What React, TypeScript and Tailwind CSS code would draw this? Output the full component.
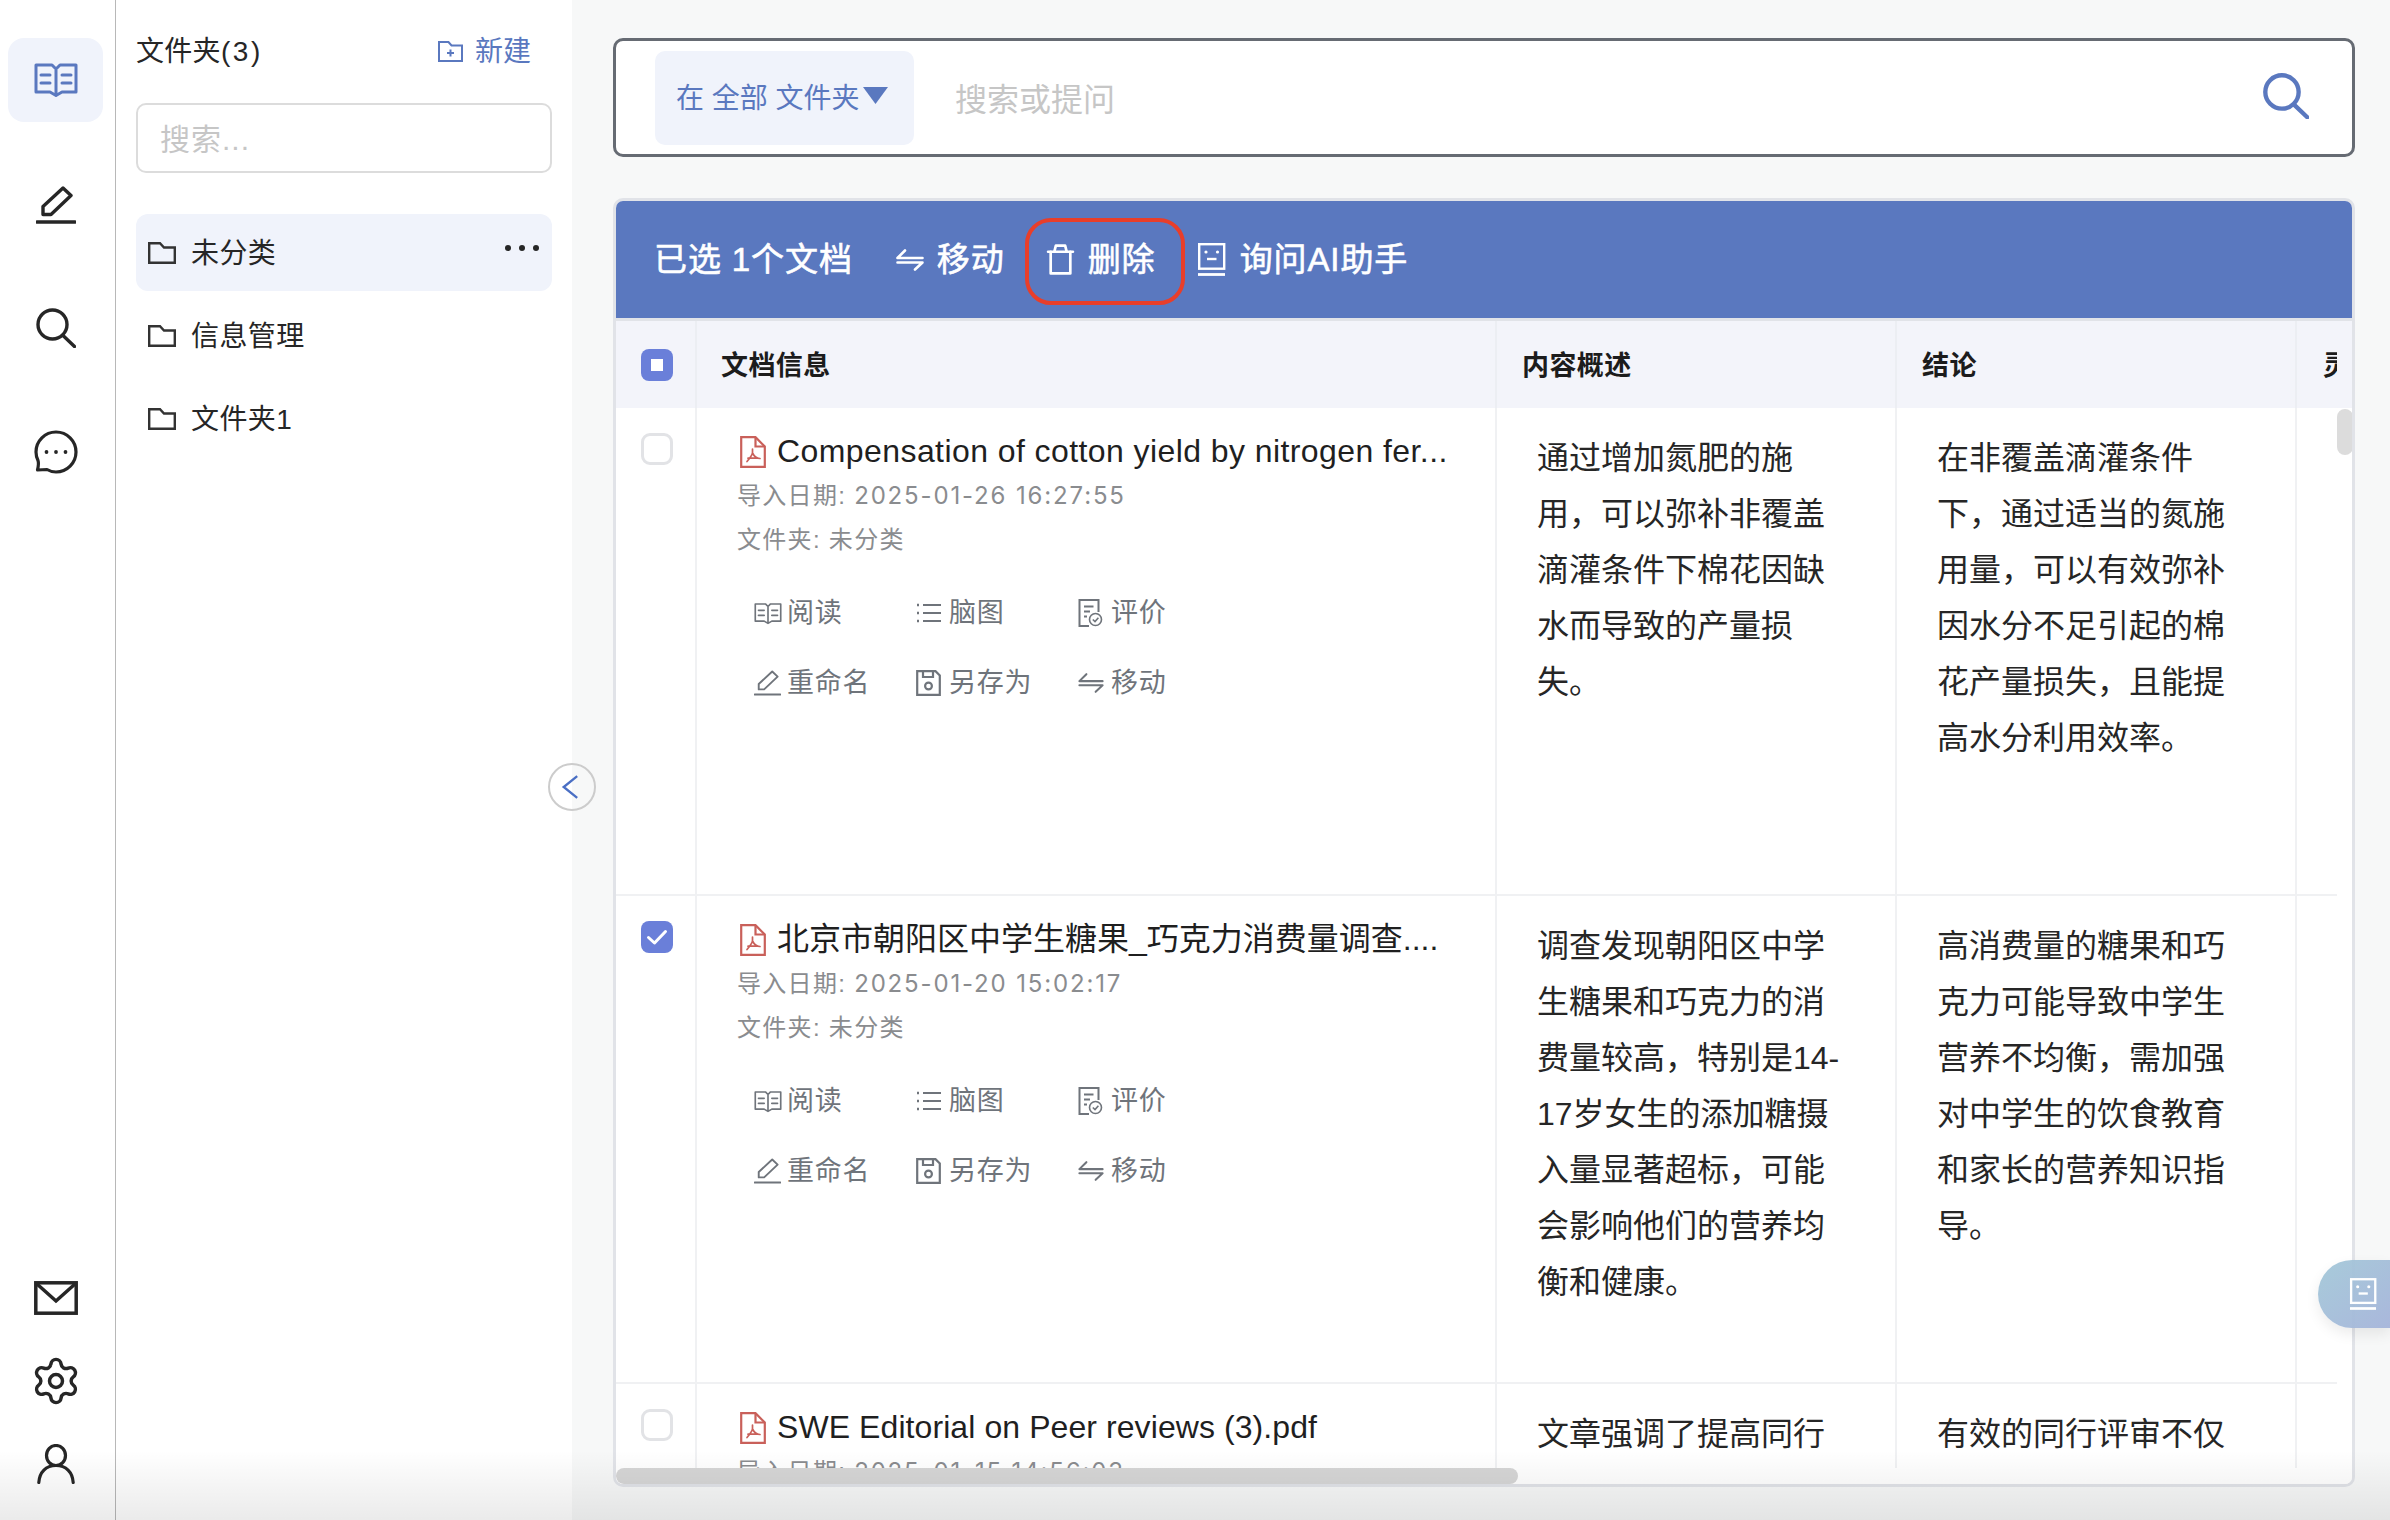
import React from "react";
import { Settings } from "lucide-react";

type IP = { className?: string };
const s = { fill: "none", stroke: "currentColor", strokeLinejoin: "round" as const, strokeLinecap: "round" as const };

const Book = ({ className, sw = 3 }: IP & { sw?: number }) => (
  <svg viewBox="0 0 44 34" className={className} {...s} strokeWidth={sw}>
    <path d="M22 6 L18 2 H2 V29 H16 L22 32.5 L28 29 H42 V2 H26 Z M22 6 V32" />
    <path d="M7 12 H16 M7 20 H16 M28 12 H37 M28 20 H37" />
  </svg>
);
const Pencil = ({ className, sw = 3.4 }: IP & { sw?: number }) => (
  <svg viewBox="0 0 40 38" className={className} {...s} strokeWidth={sw}>
    <path d="M7 28.5 V20.5 L27 2 L35 9.5 L15 28.5 Z" />
    <path d="M1 36 H39" />
  </svg>
);
const Mag = ({ className, sw = 3.4 }: IP & { sw?: number }) => (
  <svg viewBox="0 0 40 40" className={className} {...s} strokeWidth={sw}>
    <circle cx="16.5" cy="16.5" r="14.5" />
    <path d="M27 27.5 L38.5 38.5" />
  </svg>
);
const Chat = ({ className }: IP) => (
  <svg viewBox="0 0 44 44" className={className} {...s} strokeWidth={3.2}>
    <path d="M22 2 C33 2 42 11 42 22 C42 33 33 42 22 42 C18.5 42 15.5 41 13 39.5 L3.5 40 C4.5 36 5 33.5 4 30.5 C2.8 28 2 25 2 22 C2 11 11 2 22 2 Z" />
    <circle cx="12.5" cy="22" r="1.9" fill="currentColor" stroke="none" />
    <circle cx="22" cy="22" r="1.9" fill="currentColor" stroke="none" />
    <circle cx="31.5" cy="22" r="1.9" fill="currentColor" stroke="none" />
  </svg>
);
const Mail = ({ className }: IP) => (
  <svg viewBox="0 0 44 34" className={className} fill="none" stroke="currentColor" strokeWidth={3.5}>
    <rect x="1.8" y="1.8" width="40.4" height="30.4" />
    <path d="M3 3 L22 20 L41 3" />
  </svg>
);
const User = ({ className }: IP) => (
  <svg viewBox="0 0 38 40" className={className} {...s} strokeWidth={3.2}>
    <ellipse cx="19" cy="11.5" rx="9.5" ry="10" />
    <path d="M1.8 38.5 C2.5 28 9 21.5 19 21.5 C29 21.5 35.5 28 36.2 38.5" />
  </svg>
);
const Folder = ({ className }: IP) => (
  <svg viewBox="0 0 28 22" className={className} fill="none" stroke="currentColor" strokeWidth={2.4} strokeLinejoin="miter">
    <path d="M1.2 1.2 H12 L16 5.5 H26.8 V20.8 H1.2 Z" />
  </svg>
);
const FolderPlus = ({ className }: IP) => (
  <svg viewBox="0 0 25 21" className={className} fill="none" stroke="currentColor" strokeWidth={2}>
    <path d="M1 1 H10.5 L13.5 4.5 H24 V20 H1 Z" />
    <path d="M12.5 8.5 V15.5 M9 12 H16" />
  </svg>
);
const Move = ({ className, sw = 2.6 }: IP & { sw?: number }) => (
  <svg viewBox="0 0 28 22" className={className} {...s} strokeWidth={sw}>
    <path d="M9 1.5 L1.5 9 H26.5" />
    <path d="M1.5 13.5 H26.5 L19 20.5" />
  </svg>
);
const Trash = ({ className }: IP) => (
  <svg viewBox="0 0 27 30" className={className} {...s} strokeWidth={2.6}>
    <path d="M1.5 7.5 H25.5" />
    <path d="M7.5 7.5 L9 1.5 H18 L19.5 7.5" />
    <path d="M4 7.5 V28.5 H23 V7.5" />
  </svg>
);
const Robot = ({ className }: IP) => (
  <svg viewBox="0 0 29 33" className={className} fill="none" stroke="currentColor" strokeWidth={2.4}>
    <rect x="2.2" y="1.2" width="25" height="24.5" />
    <circle cx="9" cy="9" r="1.6" fill="currentColor" stroke="none" />
    <circle cx="20.5" cy="9" r="1.6" fill="currentColor" stroke="none" />
    <path d="M10 16 H19.5" />
    <path d="M1 31.5 H28" strokeWidth={2.8} />
  </svg>
);
const Pdf = ({ className }: IP) => (
  <svg viewBox="0 0 26 32" className={className} fill="none" stroke="#c9605a" strokeWidth={2.2} strokeLinejoin="miter">
    <path d="M1.2 1.2 H15.5 L24.8 10.5 V30.8 H1.2 Z" />
    <path d="M15.5 1.2 V10.5 H24.8" />
    <path d="M12.5 13 V16.5 C12.5 19 10 22 7 25.5 M12.5 17 C14 20 16 22.5 20 22.5 M8 22.2 H18" strokeWidth={1.7} strokeLinecap="round" />
  </svg>
);
const ListIcon = ({ className }: IP) => (
  <svg viewBox="0 0 26 22" className={className} fill="none" stroke="currentColor" strokeWidth={2}>
    <path d="M7 3 H25 M7 11 H25 M7 19 H25" />
    <path d="M1 3 H3 M1 11 H3 M1 19 H3" strokeWidth={2.6} />
  </svg>
);
const DocCheck = ({ className }: IP) => (
  <svg viewBox="0 0 25 28" className={className} fill="none" stroke="currentColor" strokeWidth={2}>
    <path d="M11 27 H1.5 V1 H20.5 V13" />
    <path d="M6 7.5 H15.5 M6 12.5 H12 M6 17.5 H9" />
    <circle cx="17.5" cy="20.5" r="6" strokeWidth={1.6} />
    <path d="M14.8 20.5 L17 22.6 L20.4 18.8" strokeWidth={1.6} />
  </svg>
);
const Save = ({ className }: IP) => (
  <svg viewBox="0 0 25 26" className={className} fill="none" stroke="currentColor" strokeWidth={2.2}>
    <path d="M1.2 1.2 H19.5 L23.8 5.5 V24.8 H1.2 Z" />
    <path d="M7 1.5 V7 H17 V1.5" />
    <circle cx="12.5" cy="16" r="3.4" />
  </svg>
);

const CheckBox = ({ mode }: { mode: "off" | "on" | "mixed" }) =>
  mode === "off" ? (
    <div className="w-[32px] h-[32px] rounded-[9px] border-[3px] border-[#e2e3e6] bg-white" />
  ) : (
    <div className="w-[32px] h-[32px] rounded-[8px] bg-[#6a7fd9] flex items-center justify-center">
      {mode === "mixed" ? (
        <div className="w-[12px] h-[12px] bg-white" />
      ) : (
        <svg viewBox="0 0 32 32" className="w-[32px] h-[32px]" fill="none" stroke="#fff" strokeWidth={3} strokeLinecap="round" strokeLinejoin="round">
          <path d="M7.5 16.5 L13.5 22 L24.5 10.5" />
        </svg>
      )}
    </div>
  );

const Action = ({ icon, text }: { icon: React.ReactNode; text: string }) => (
  <div className="flex items-center h-[70px]">
    <span className="w-[35px] pl-[2px] flex items-center">{icon}</span>
    <span>{text}</span>
  </div>
);

const Row = ({
  on,
  title,
  titleClass,
  date,
  a,
  b,
  last,
}: {
  on?: boolean;
  title: string;
  titleClass?: string;
  date: string;
  a: string;
  b: string;
  last?: boolean;
}) => (
  <div className={`grid grid-cols-[81px_800px_400px_400px_40px] h-[488px] shrink-0 ${last ? "" : "border-b-2 border-[#f0f1f3]"}`}>
    <div className="border-r-2 border-[#f0f1f3] flex justify-center pt-[25px] pl-[2px]">
      <CheckBox mode={on ? "on" : "off"} />
    </div>
    <div className="border-r-2 border-[#f0f1f3] pl-[40px] pt-[22px]">
      <div className="flex items-center h-[44px] text-[32px] text-[#1f1f1f]">
        <Pdf className="w-[26px] h-[32px] ml-[3px] mr-[11px] shrink-0" />
        <span className={`whitespace-nowrap pb-[2px] ${titleClass ?? ""}`}>{title}</span>
      </div>
      <div className="text-[24px] leading-[44px] tracking-[1.3px] text-[#8a8c8f]">
        导入日期: <span className="tracking-[1.85px] font-['Inter','Noto_Sans_CJK_SC',sans-serif]">{date}</span>
      </div>
      <div className="text-[24px] leading-[44px] tracking-[1.3px] text-[#8a8c8f]">文件夹: 未分类</div>
      <div className="mt-[16px] ml-[15px] grid grid-cols-[162px_162px_100px] text-[27px] tracking-[0.8px] text-[#6f747b]">
        <Action icon={<Book className="w-[28px] h-[23px]" sw={2.6} />} text="阅读" />
        <Action icon={<ListIcon className="w-[26px] h-[22px]" />} text="脑图" />
        <Action icon={<DocCheck className="w-[25px] h-[28px]" />} text="评价" />
        <Action icon={<Pencil className="w-[27px] h-[26px]" sw={2.8} />} text="重命名" />
        <Action icon={<Save className="w-[25px] h-[26px]" />} text="另存为" />
        <Action icon={<Move className="w-[26px] h-[22px]" sw={2.2} />} text="移动" />
      </div>
    </div>
    <div className="border-r-2 border-[#f0f1f3] px-[40px] pt-[22px] text-[32px] leading-[56px] text-[#262626]">{a}</div>
    <div className="border-r-2 border-[#f0f1f3] px-[40px] pt-[22px] text-[32px] leading-[56px] text-[#262626]">{b}</div>
    <div />
  </div>
);

export default function App() {
  return (
    <div className="relative w-[2390px] h-[1520px] flex overflow-hidden bg-white font-['Liberation_Sans','Noto_Sans_CJK_SC',sans-serif]">
      {/* rail */}
      <div className="w-[116px] shrink-0 h-full border-r border-[#b8b8b8] flex flex-col items-center pt-[38px] pb-[26px] text-[#262626]">
        <div className="w-[95px] h-[84px] rounded-[16px] bg-[#f0f3fb] flex items-center justify-center text-[#5a78bf] mr-[4px]">
          <Book className="w-[44px] h-[34px]" />
        </div>
        <div className="h-[84px] mt-[41px] flex items-center mr-[3px]"><Pencil className="w-[40px] h-[38px]" /></div>
        <div className="h-[84px] mt-[39px] flex items-center mr-[3px]"><Mag className="w-[40px] h-[40px]" /></div>
        <div className="h-[84px] mt-[40px] flex items-center mr-[3px]"><Chat className="w-[44px] h-[44px]" /></div>
        <div className="mt-auto flex flex-col gap-[23px] items-center mr-[3px]">
          <div className="h-[60px] flex items-center"><Mail className="w-[44px] h-[34px]" /></div>
          <div className="h-[60px] flex items-center"><Settings className="w-[52px] h-[52px]" strokeWidth={1.6} /></div>
          <div className="h-[60px] flex items-center"><User className="w-[38px] h-[40px]" /></div>
        </div>
      </div>

      {/* folders */}
      <div className="w-[456px] shrink-0 h-full bg-white px-[20px] pt-[30px] text-[#262626]">
        <div className="h-[42px] flex items-center justify-between pr-[21px] text-[28px]">
          <span className="pt-[1px] tracking-[0.3px]">文件夹<span className="tracking-[2.6px]">(3)</span></span>
          <span className="flex items-center gap-[12px] text-[#5a78bf]">
            <FolderPlus className="w-[25px] h-[21px]" />
            <span className="pt-[1px]">新建</span>
          </span>
        </div>
        <div className="mt-[31px] h-[70px] rounded-[10px] border-2 border-[#dcdcdc] flex items-center pl-[22px] pt-[3px] text-[30px] tracking-[1px] text-[#c6c6c6]">
          搜索...
        </div>
        <div className="mt-[41px] flex flex-col gap-[6px] text-[28px] tracking-[0.4px]">
          <div className="h-[77px] rounded-[12px] bg-[#f0f3fb] flex items-center pl-[12px] pr-[13px]">
            <Folder className="w-[28px] h-[22px] mr-[15px] text-[#333]" />
            <span className="pt-[3px]">未分类</span>
            <span className="ml-auto flex gap-[8px] mb-[9px]">
              <i className="w-[6px] h-[6px] rounded-full bg-[#262626]" />
              <i className="w-[6px] h-[6px] rounded-full bg-[#262626]" />
              <i className="w-[6px] h-[6px] rounded-full bg-[#262626]" />
            </span>
          </div>
          <div className="h-[77px] flex items-center pl-[12px]">
            <Folder className="w-[28px] h-[22px] mr-[15px] text-[#333]" />
            <span className="pt-[3px]">信息管理</span>
          </div>
          <div className="h-[77px] flex items-center pl-[12px]">
            <Folder className="w-[28px] h-[22px] mr-[15px] text-[#333]" />
            <span className="pt-[3px]">文件夹1</span>
          </div>
        </div>
      </div>

      {/* main */}
      <div className="flex-1 h-full bg-[#f7f8f8] pl-[41px] pr-[35px] pt-[38px]">
        <div className="h-[119px] rounded-[10px] border-[3px] border-[#666b73] bg-white flex items-center pl-[39px] pr-[43px]">
          <div className="w-[259px] h-[94px] rounded-[10px] bg-[#f0f3fb] flex items-center pl-[21px] text-[28px] text-[#5a78bf] whitespace-pre">
            <span className="pt-[3px]">在 全部 文件夹</span>
            <svg viewBox="0 0 25 17" className="w-[25px] h-[17px] ml-[3px] mb-[4px]"><path d="M0 0 H25 L12.5 17 Z" fill="#5a78bf" /></svg>
          </div>
          <span className="ml-[41px] pt-[5px] text-[32px] text-[#c6c6c6]">搜索或提问</span>
          <Mag className="ml-auto mb-[4px] w-[46px] h-[46px] text-[#5a78bf]" sw={3.8} />
        </div>

        <div className="mt-[41px] h-[1289px] rounded-[10px] border-[3px] border-[#e1e3e8] bg-white overflow-hidden">
          <div className="h-[117px] bg-[#5a78bf] flex items-center pl-[38px] text-[33px] tracking-[0.9px] font-normal [-webkit-text-stroke:0.6px_white] text-white">
            <span>已选 1个文档</span>
            <Move className="w-[28px] h-[22px] ml-[43px]" />
            <span className="ml-[13px]">移动</span>
            <div className="ml-[20px] mt-[4px] pb-[4px] w-[160px] h-[87px] rounded-[26px] border-4 border-[#e83e2a] flex items-center pl-[17px]">
              <Trash className="w-[29px] h-[31px]" />
              <span className="ml-[13px]">删除</span>
            </div>
            <Robot className="w-[29px] h-[33px] ml-[12px]" />
            <span className="ml-[14px]">询问AI助手</span>
          </div>
          <div className="h-[90px] border-t-[3px] border-[#e1e3e8] bg-[#f3f4fa] overflow-hidden">
            <div className="grid grid-cols-[81px_800px_400px_400px_40px] h-full text-[27px] tracking-[0.4px] font-semibold text-[#1c1c1c] w-[1721px]">
              <div className="border-r-2 border-[#eceef3] flex items-center justify-center pl-[2px]"><CheckBox mode="mixed" /></div>
              <div className="border-r-2 border-[#eceef3] flex items-center pl-[24px] pt-[3px]">文档信息</div>
              <div className="border-r-2 border-[#eceef3] flex items-center pl-[25px] pt-[3px]">内容概述</div>
              <div className="border-r-2 border-[#eceef3] flex items-center pl-[25px] pt-[3px]">结论</div>
              <div className="overflow-hidden flex items-center pl-[26px] pt-[3px] whitespace-nowrap">灵感</div>
            </div>
          </div>
          <div className="relative h-[1060px] overflow-hidden">
            <div className="w-[1721px] flex flex-col">
              <Row
                title="Compensation of cotton yield by nitrogen fer..."
                titleClass="tracking-[0.42px]"
                date="2025-01-26 16:27:55"
                a="通过增加氮肥的施用，可以弥补非覆盖滴灌条件下棉花因缺水而导致的产量损失。"
                b="在非覆盖滴灌条件下，通过适当的氮施用量，可以有效弥补因水分不足引起的棉花产量损失，且能提高水分利用效率。"
              />
              <Row
                on
                title="北京市朝阳区中学生糖果_巧克力消费量调查...."
                date="2025-01-20 15:02:17"
                a="调查发现朝阳区中学生糖果和巧克力的消费量较高，特别是14-17岁女生的添加糖摄入量显著超标，可能会影响他们的营养均衡和健康。"
                b="高消费量的糖果和巧克力可能导致中学生营养不均衡，需加强对中学生的饮食教育和家长的营养知识指导。"
              />
              <Row
                last
                title="SWE Editorial on Peer reviews (3).pdf"
                titleClass="tracking-[0.08px]"
                date="2025-01-15 14:56:03"
                a="文章强调了提高同行"
                b="有效的同行评审不仅"
              />
            </div>
            <div className="absolute left-[1721px] top-[1px] w-[16px] h-[46px] rounded-full bg-[#dcdcdc]" />
          </div>
          <div className="h-[16px] bg-white">
            <div className="w-[902px] h-[16px] rounded-full bg-[#d6d6d6]" />
          </div>
        </div>
      </div>

      {/* collapse */}
      <div className="absolute left-[548px] top-[763px] w-[48px] h-[48px] rounded-full border-2 border-[#cccccc] flex items-center justify-center">
        <svg viewBox="0 0 20 28" className="w-[18px] h-[26px] mr-[4px]" fill="none" stroke="#4a6fc4" strokeWidth={2.6}><path d="M18 2 L3 14 L18 26" /></svg>
      </div>

      {/* floating assistant */}
      <div className="absolute right-0 top-[1260px] w-[72px] h-[68px] rounded-l-[34px] bg-linear-to-br from-[#a3c8d8]/95 to-[#a5b4da]/95 shadow-[0_6px_14px_rgba(0,0,0,0.08)] flex items-center pl-[31px] text-white">
        <Robot className="w-[28px] h-[34px]" />
      </div>

      {/* bottom fade */}
      <div className="absolute left-0 right-0 bottom-0 h-[70px] pointer-events-none bg-linear-to-b from-transparent to-black/8" />
    </div>
  );
}
